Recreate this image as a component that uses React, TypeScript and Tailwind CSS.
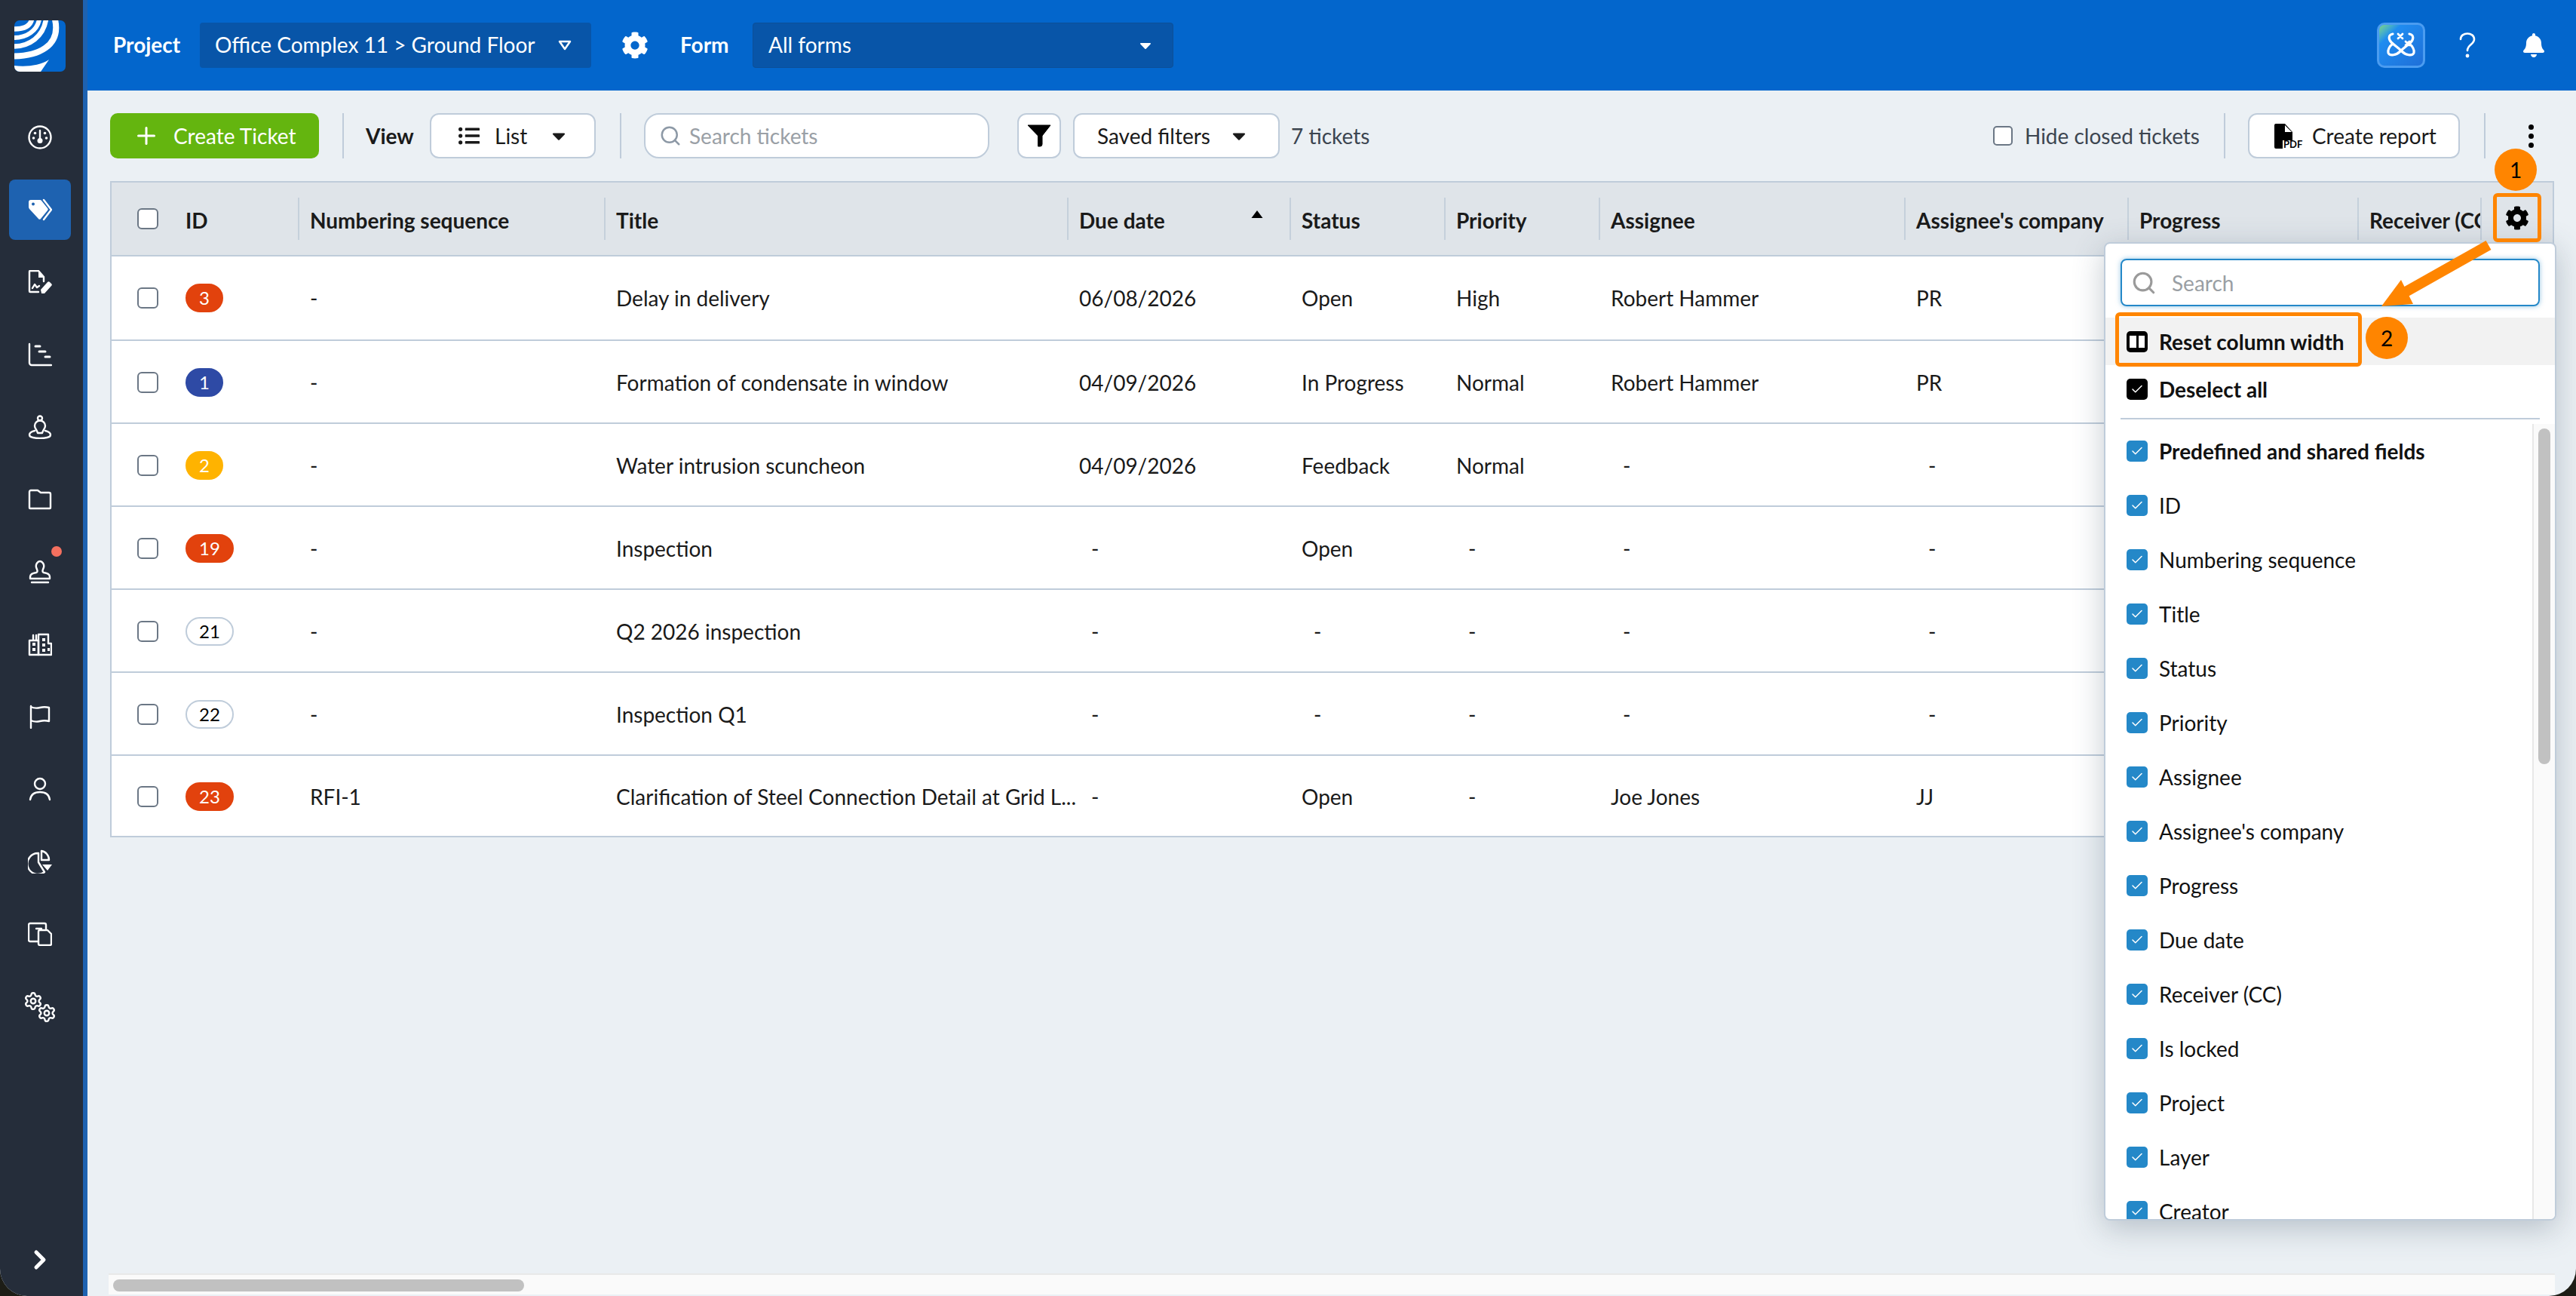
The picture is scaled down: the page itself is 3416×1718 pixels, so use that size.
import { FaBell, FaCaretDown, FaCog, FaListUl } from "react-icons/fa";
import { Check, ChevronRight, Plus, Search, Settings } from "lucide-react";
import type { ReactNode } from "react";

const columnGrid =
  "grid grid-cols-[247px_406px_614px_295px_205px_205px_405px_296px_305px_163px_96px]";

const stroke = {
  fill: "none",
  stroke: "white",
  strokeWidth: 2.4,
  strokeLinecap: "round" as const,
  strokeLinejoin: "round" as const,
};

function Icon({ children }: { children: ReactNode }) {
  return (
    <svg viewBox="0 0 32 32" className="h-8 w-8">
      {children}
    </svg>
  );
}

const navIcons: ReactNode[] = [
  <Icon key="gauge">
    <g {...stroke}>
      <circle cx="16" cy="16" r="14.5" />
      <path d="M16 7v11" />
    </g>
    <circle cx="16" cy="20.500" r="3.5" fill="white" />
    <circle cx="9.500" cy="10.500" r="1.8" fill="white" />
    <circle cx="22.500" cy="10.500" r="1.8" fill="white" />
    <circle cx="7.500" cy="17" r="1.8" fill="white" />
    <circle cx="24.500" cy="17" r="1.8" fill="white" />
  </Icon>,
  <Icon key="tag">
    <path d="M1 6a3 3 0 0 1 3-3h12a3 3 0 0 1 2 1l8 10a2 2 0 0 1 0 3l-9 11a2 2 0 0 1-3 0L2 15a4 4 0 0 1-1-3z" fill="white" />
    <circle cx="7" cy="8.500" r="2" fill="#1e62b0" />
    <path d="M21 3l10 13-10 13" {...stroke} />
  </Icon>,
  <Icon key="sign">
    <g {...stroke}>
      <path d="M21 15V9l-7-8H3a1 1 0 0 0-1 1v26a1 1 0 0 0 1 1h11" />
      <path d="M6 24l3-5 3 4 3-2" />
    </g>
    <path d="M14 1v9h8z" fill="white" />
    <path d="M18 31l-1-5 9-10a2 2 0 0 1 3 0l2 2a2 2 0 0 1 0 3l-9 10z" fill="white" />
  </Icon>,
  <Icon key="gantt">
    <g {...stroke}>
      <path d="M2 2v25a3 3 0 0 0 3 3h26" />
      <path d="M10 5h6M15 12h8M23 19h6" strokeWidth="3" />
    </g>
  </Icon>,
  <Icon key="pin">
    <g {...stroke}>
      <circle cx="16" cy="4.5" r="3" />
      <path d="M13 24c-1-4-4-6-4-9.500a7 7 0 0 1 14 0c0 3.500-3 5.500-4 9.500z" />
      <path d="M9 21c-4 1-7 3-7 5.500 0 3 7 4.500 14 4.500s14-1.500 14-4.500c0-2.500-3-4.500-7-5.500" />
    </g>
  </Icon>,
  <Icon key="folder">
    <path
      {...stroke}
      d="M2 6a2 2 0 0 1 2-2h9l4 3h11a2 2 0 0 1 2 2v18a1 1 0 0 1-1 1H3a1 1 0 0 1-1-1z"
    />
  </Icon>,
  <Icon key="stamp">
    <g {...stroke}>
      <path d="M5 30h22" />
      <path d="M3 23c0-4 3-5 8-6 3-1 1-4 0-7-1-4 2-8 5-8s6 4 5 8c-1 3-3 6 0 7 5 1 8 2 8 6v2H3z" />
    </g>
  </Icon>,
  <Icon key="building">
    <g {...stroke}>
      <path d="M2 30V11h12v19z" />
      <path d="M14 30V3h13v12h4v15z" />
      <path d="M7 4v6M11 4v6" />
    </g>
    <g fill="white">
      <rect x="6" y="14" width="4" height="4" />
      <rect x="6" y="21" width="4" height="4" />
      <rect x="19" y="8" width="4" height="4" />
      <rect x="19" y="15" width="4" height="4" />
      <rect x="19" y="22" width="4" height="4" />
      <rect x="26" y="21" width="3" height="4" />
    </g>
  </Icon>,
  <Icon key="flag">
    <path
      {...stroke}
      d="M4 31V2M4 3c4 2 8 2 12 1s8-1 12 0v18c-4-1-8-1-12 0s-8 1-12-1"
    />
  </Icon>,
  <Icon key="person">
    <g {...stroke}>
      <circle cx="16" cy="9" r="7" />
      <path d="M3 30c1-7 6-10 13-10s12 3 13 10" />
    </g>
  </Icon>,
  <Icon key="pie">
    <g {...stroke}>
      <path d="M14 5a14 14 0 1 0 8 25L14 17z" />
      <path d="M18 2a12 12 0 0 1 10 12H18z" />
    </g>
    <path d="M19 20h13l-6 8z" fill="white" />
  </Icon>,
  <Icon key="copy">
    <g {...stroke}>
      <path d="M13 26H3a2 2 0 0 1-2-2V4a2 2 0 0 1 2-2h19a2 2 0 0 1 2 2v5" />
      <path d="M16 11h10l5 5v13a2 2 0 0 1-2 2H16a2 2 0 0 1-2-2V13a2 2 0 0 1 2-2z" />
      <path d="M11 9h7" />
    </g>
  </Icon>,
  <div key="gears" className="relative h-10 w-10">
    <Settings className="absolute -left-0.5 top-0 h-[26px] w-[26px] text-white" strokeWidth={2.2} />
    <Settings className="absolute -bottom-0.5 -right-0.5 h-[26px] w-[26px] text-white" strokeWidth={2.2} />
  </div>,
];

type Ticket = {
  id: number;
  badge: string;
  seq: string;
  title: string;
  due: string;
  status: string;
  priority: string;
  assignee: string;
  company: string;
};

const red = "border-[#e2420d] bg-[#e2420d] text-white";
const plain = "border-[#bfccda] bg-white text-black";

const tickets: Ticket[] = [
  { id: 3, badge: red, seq: "-", title: "Delay in delivery", due: "06/08/2026", status: "Open", priority: "High", assignee: "Robert Hammer", company: "PR" },
  { id: 1, badge: "border-[#2e4aa5] bg-[#2e4aa5] text-white", seq: "-", title: "Formation of condensate in window", due: "04/09/2026", status: "In Progress", priority: "Normal", assignee: "Robert Hammer", company: "PR" },
  { id: 2, badge: "border-[#ffb300] bg-[#ffb300] text-white", seq: "-", title: "Water intrusion scuncheon", due: "04/09/2026", status: "Feedback", priority: "Normal", assignee: "-", company: "-" },
  { id: 19, badge: red, seq: "-", title: "Inspection", due: "-", status: "Open", priority: "-", assignee: "-", company: "-" },
  { id: 21, badge: plain, seq: "-", title: "Q2 2026 inspection", due: "-", status: "-", priority: "-", assignee: "-", company: "-" },
  { id: 22, badge: plain, seq: "-", title: "Inspection Q1", due: "-", status: "-", priority: "-", assignee: "-", company: "-" },
  { id: 23, badge: red, seq: "RFI-1", title: "Clarification of Steel Connection Detail at Grid L...", due: "-", status: "Open", priority: "-", assignee: "Joe Jones", company: "JJ" },
];

const columnNames = [
  "Predefined and shared fields",
  "ID",
  "Numbering sequence",
  "Title",
  "Status",
  "Priority",
  "Assignee",
  "Assignee's company",
  "Progress",
  "Due date",
  "Receiver (CC)",
  "Is locked",
  "Project",
  "Layer",
  "Creator",
];

function Box() {
  return (
    <span className="block h-7 w-7 shrink-0 rounded-[6px] border-2 border-[#6b7785] bg-white" />
  );
}

function Cell({ value }: { value: string }) {
  return (
    <div className="flex items-center whitespace-nowrap pl-4">
      <span className={value === "-" ? "pl-4" : ""}>{value}</span>
    </div>
  );
}

function HeadCell({ label, children }: { label: string; children?: ReactNode }) {
  return (
    <div className="flex h-full items-center py-[20px]">
      <div className="flex h-full w-full items-center overflow-hidden whitespace-nowrap border-l-2 border-[#c5d0db] pl-[14px] pt-[3px]">
        {label}
        {children}
      </div>
    </div>
  );
}

function Badge({ ticket }: { ticket: Ticket }) {
  return (
    <span
      className={`flex h-[38px] items-center justify-center rounded-full border-2 text-[24px] ${ticket.badge} ${
        ticket.id > 9 ? "w-16" : "w-[50px]"
      }`}
    >
      {ticket.id}
    </span>
  );
}

function Pill({ className, children }: { className: string; children: ReactNode }) {
  return (
    <div
      className={`flex h-[60px] shrink-0 items-center rounded-[12px] border-2 border-[#bfccda] bg-white ${className}`}
    >
      {children}
    </div>
  );
}

function Sep({ className = "" }: { className?: string }) {
  return <span className={`block h-[60px] w-0.5 shrink-0 bg-[#bfccda] ${className}`} />;
}

function Sidebar() {
  return (
    <aside className="flex w-[116px] shrink-0 flex-col border-r-[6px] border-[#1e62b0] bg-[#252d3a] pr-1">
      <div className="flex h-[134px] shrink-0 items-start justify-center pt-[27px]">
        <svg viewBox="0 0 68 68" className="h-[68px] w-[68px]">
          <clipPath id="logo-clip">
            <rect width="68" height="68" rx="7" />
          </clipPath>
          <g clipPath="url(#logo-clip)">
            <rect width="68" height="68" fill="#0366cc" />
            <g fill="none" stroke="white">
              <path d="M0 11.500C12 11.500 21 8 23 -1" strokeWidth="6.500" />
              <path d="M0 23C16 23 30 14 33 -1" strokeWidth="6" />
              <path d="M0 34.500C20 34 38 22 42 -1" strokeWidth="6.500" />
              <path d="M0 47.500C30 47 62 35 54 -1" strokeWidth="8" />
            </g>
            <path d="M0 60C15 62 34 60 46 52L35 68H0z" fill="white" />
          </g>
        </svg>
      </div>
      {navIcons.map((icon, i) => (
        <div key={i} className="flex h-24 shrink-0 items-center justify-center">
          <div
            className={`relative flex h-20 w-[82px] items-center justify-center rounded-[8px] ${
              i === 1 ? "bg-[#1e62b0]" : ""
            }`}
          >
            {icon}
            {i === 6 && (
              <span className="absolute right-[12px] top-[6px] h-3.5 w-3.5 rounded-full bg-[#f4705f]" />
            )}
          </div>
        </div>
      ))}
      <div className="mt-auto flex justify-center pb-[28px]">
        <ChevronRight className="h-10 w-10 text-white" strokeWidth={3} />
      </div>
    </aside>
  );
}

function TopBar() {
  return (
    <header className="flex h-[120px] shrink-0 items-center bg-[#0366cc] pl-[34px] pr-10 text-white">
      <span className="w-[115px] shrink-0 pb-[3px] font-bold">Project</span>
      <div className="flex h-[60px] w-[519px] shrink-0 items-center justify-between rounded-[4px] bg-[#0855a8] pl-5 pr-[26px]">
        <span className="pb-[3px]">Office Complex 11 &gt; Ground Floor</span>
        <svg viewBox="0 0 18 14" className="h-3.5 w-[18px]">
          <path d="M2 2h14L9 12z" fill="none" stroke="white" strokeWidth="2.5" strokeLinejoin="round" />
        </svg>
      </div>
      <FaCog className="ml-10 h-9 w-9 shrink-0" />
      <span className="ml-[42px] w-24 shrink-0 pb-[3px] font-bold">Form</span>
      <div className="flex h-[60px] w-[558px] shrink-0 items-center justify-between rounded-[4px] border border-[#0c4f98] bg-[#0855a8] pl-5 pr-6">
        <span className="pb-[3px]">All forms</span>
        <FaCaretDown className="h-6 w-6" />
      </div>
      <div className="ml-auto flex h-[60px] w-16 shrink-0 items-center justify-center rounded-[10px] border-[3px] border-[#4b9cf0] bg-gradient-to-br from-[#7ed47f] via-[#1f8cf0] via-[25%] to-[#1f6fd8]">
        <svg viewBox="0 0 40 40" className="h-10 w-10">
          <g fill="none" stroke="white" strokeWidth="3.200" strokeLinecap="round">
            <path d="M9 5C3 6 3 12 7 16c4 4 9 7 14 12 5 5 14 7 16 2 1-4-2-9-6-12" />
            <path d="M31 5c6 1 6 7 2 11-4 4-9 7-14 12-5 5-14 7-16 2-1-4 2-9 6-12" />
            <path d="M16 5l6 6M22 5l-6 6M26 15l5 5M31 15l-5 5" strokeWidth="2.800" />
          </g>
        </svg>
      </div>
      <svg viewBox="0 0 24 36" className="ml-11 h-9 w-6 shrink-0">
        <path
          d="M3 10c0-10 18-10 18 0 0 7-9 7-9 15"
          fill="none"
          stroke="white"
          strokeWidth="2.6"
          strokeLinecap="round"
        />
        <circle cx="12" cy="32" r="2.400" fill="white" />
      </svg>
      <FaBell className="ml-[60px] h-8 w-8 shrink-0" />
    </header>
  );
}

function Toolbar() {
  return (
    <div className="flex items-center pl-[30px] pt-[30px] text-[#1a1a1a]">
      <div className="flex h-[60px] w-[277px] shrink-0 items-center gap-[18px] rounded-[10px] bg-[#64b50f] pl-[30px] text-white">
        <Plus className="h-9 w-9" strokeWidth={2} />
        <span>Create Ticket</span>
      </div>
      <Sep className="ml-[31px]" />
      <span className="ml-[29px] w-[85px] shrink-0 font-bold">View</span>
      <Pill className="w-[220px] pl-[34px]">
        <FaListUl className="h-7 w-8" />
        <span className="ml-[18px]">List</span>
        <FaCaretDown className="ml-7 h-7 w-7" />
      </Pill>
      <Sep className="ml-8" />
      <Pill className="ml-[30px] w-[458px] rounded-[20px] pl-[18px] text-[#9aa0a6]">
        <Search className="h-[30px] w-[30px] text-[#8d99a6]" strokeWidth={2} />
        <span className="ml-2.5">Search tickets</span>
      </Pill>
      <Pill className="ml-[37px] w-[58px] justify-center">
        <svg viewBox="0 0 32 30" className="h-[30px] w-8">
          <path d="M1 1h30L20 15v11q0 3-2.500 3h-3V15z" fill="black" stroke="black" strokeLinejoin="round" />
        </svg>
      </Pill>
      <Pill className="ml-4 w-[274px] pl-[30px]">
        <span>Saved filters</span>
        <FaCaretDown className="ml-6 h-7 w-7" />
      </Pill>
      <span className="ml-[15px] whitespace-nowrap text-[#3c4550]">7 tickets</span>
      <span className="ml-auto block h-[26px] w-[26px] shrink-0 rounded-[5px] border-2 border-[#6b7785] bg-white" />
      <span className="ml-[16px] whitespace-nowrap text-[#3c4550]">Hide closed tickets</span>
      <Sep className="ml-8" />
      <Pill className="ml-[30px] w-[281px] pl-[33px]">
        <div className="relative h-[33px] w-[33px] shrink-0">
          <svg viewBox="0 0 24 33" className="h-[33px] w-6">
            <path d="M2 0h12l10 11v11H11v11H2a2 2 0 0 1-2-2V2a2 2 0 0 1 2-2z" fill="black" />
            <path d="M14 2v9h9z" fill="white" />
          </svg>
          <span className="absolute -bottom-px left-3 text-[13px] font-bold leading-none text-black">
            PDF
          </span>
        </div>
        <span className="ml-[17px] whitespace-nowrap">Create report</span>
      </Pill>
      <Sep className="ml-8" />
      <div className="ml-[57px] mr-[56px] flex flex-col gap-[5px]">
        <span className="block h-[7px] w-[7px] rounded-full bg-black" />
        <span className="block h-[7px] w-[7px] rounded-full bg-black" />
        <span className="block h-[7px] w-[7px] rounded-full bg-black" />
      </div>
    </div>
  );
}

function rowClass(i: number) {
  if (i === 0) return "h-[112px] border-b-2 border-[#bfccda]";
  if (i === tickets.length - 1) return "h-[106px] pt-0.5";
  return "h-[110px] border-b-2 border-[#bfccda] pt-px";
}

function TicketTable() {
  return (
    <div className="ml-[30px] mt-[30px] w-[3241px] border-2 border-[#bfccda] bg-white text-[#1a1a1a]">
      <div className={`${columnGrid} h-[98px] border-b-2 border-[#bfccda] bg-[#dfe4e9] font-bold`}>
        <div className="flex items-center gap-[36px] pl-[34px]">
          <Box />
          <span className="pt-[3px]">ID</span>
        </div>
        <HeadCell label="Numbering sequence" />
        <HeadCell label="Title" />
        <HeadCell label="Due date">
          <svg viewBox="0 0 20 12" className="mb-4 ml-[112px] h-2.5 w-5">
            <path d="M10 0l9 12H1z" fill="black" />
          </svg>
        </HeadCell>
        <HeadCell label="Status" />
        <HeadCell label="Priority" />
        <HeadCell label="Assignee" />
        <HeadCell label="Assignee's company" />
        <HeadCell label="Progress" />
        <HeadCell label="Receiver (CC)" />
        <HeadCell label="" />
      </div>
      {tickets.map((t, i) => (
        <div key={t.id} className={`${columnGrid} ${rowClass(i)}`}>
          <div className="flex items-center gap-[36px] pl-[34px]">
            <Box />
            <Badge ticket={t} />
          </div>
          <div className="flex items-center pl-4">{t.seq}</div>
          <div className="flex items-center whitespace-nowrap pl-4">{t.title}</div>
          <Cell value={t.due} />
          <Cell value={t.status} />
          <Cell value={t.priority} />
          <Cell value={t.assignee} />
          <Cell value={t.company} />
        </div>
      ))}
    </div>
  );
}

function ColumnMenu() {
  return (
    <div className="absolute left-[2790px] top-[321px] flex h-[1297px] w-[600px] flex-col overflow-hidden rounded-[8px] border-2 border-[#bfccda] bg-white text-[#111] shadow-[0_10px_40px_rgba(60,80,100,0.3)]">
      <div className="mx-5 mt-5 flex h-[63px] shrink-0 items-center rounded-[8px] border-2 border-[#2488c8] pl-3 shadow-[0_0_6px_rgba(36,136,200,0.5)]">
        <Search className="h-[34px] w-[34px] text-[#9a9a9a]" strokeWidth={2.2} />
        <span className="ml-5 text-[#9a9fa4]">Search</span>
      </div>
      <div className="mt-[15px] flex h-[63px] shrink-0 items-center bg-[#f2f2f2] pl-[28px] font-bold">
        <span className="flex h-7 w-7 items-center justify-center gap-[3px] rounded-[5px] bg-black px-[4px] py-[6px]">
          <span className="block h-full flex-1 bg-white" />
          <span className="block h-full flex-1 bg-white" />
        </span>
        <span className="ml-[15px]">Reset column width</span>
      </div>
      <div className="flex h-[63px] shrink-0 items-center pl-[28px] font-bold">
        <span className="flex h-7 w-7 items-center justify-center rounded-[5px] bg-black">
          <Check className="h-[18px] w-[18px] text-white" strokeWidth={2} />
        </span>
        <span className="ml-[15px]">Deselect all</span>
      </div>
      <div className="mx-5 mt-[7px] h-0.5 shrink-0 bg-[#bfccda]" />
      <div className="flex min-h-0 flex-1 pt-1.5">
        <div className="min-w-0 flex-1 overflow-hidden">
          {columnNames.map((name, i) => (
            <div key={name} className={`flex h-[72px] items-center pl-7 ${i === 0 ? "font-bold" : ""}`}>
              <span className="flex h-7 w-7 shrink-0 items-center justify-center rounded-[5px] bg-[#2488c8]">
                <Check className="h-[18px] w-[18px] text-white" strokeWidth={2} />
              </span>
              <span className="ml-[15px]">{name}</span>
            </div>
          ))}
        </div>
        <div className="w-[30px] shrink-0 border-l-2 border-[#e8e8e8] bg-[#fafafa] pl-[6px] pt-1.5">
          <div className="h-[445px] w-4 rounded-full bg-[#c1c1c1]" />
        </div>
      </div>
    </div>
  );
}

function Annotations() {
  return (
    <>
      <div className="absolute left-[3306px] top-[256px] flex h-[65px] w-16 items-center justify-center rounded-[6px] border-[5px] border-[#ff8500]">
        <FaCog className="h-8 w-8 text-black" />
      </div>
      <span className="absolute left-[3308px] top-[197px] flex h-14 w-14 items-center justify-center rounded-full bg-[#ff8500] text-black">
        1
      </span>
      <div className="absolute left-[2805px] top-[414px] h-[72px] w-[327px] rounded-[6px] border-[5px] border-[#ff8500]" />
      <span className="absolute left-[3137px] top-[420px] flex h-14 w-14 items-center justify-center rounded-full bg-[#ff8500] text-black">
        2
      </span>
      <svg viewBox="0 0 170 100" className="absolute left-[3150px] top-[318px] h-[100px] w-[170px]">
        <path d="M150 7L40 69" stroke="#ff8500" strokeWidth="14" fill="none" />
        <path d="M8 88L34 53L50 85z" fill="#ff8500" />
      </svg>
    </>
  );
}

export default function App() {
  return (
    <div className="h-screen w-full overflow-hidden bg-[#1d1d16] font-['Lato',sans-serif] text-[28px]">
      <div className="relative flex h-full overflow-hidden rounded-b-[36px] bg-[#ebf0f4]">
        <Sidebar />
        <main className="flex min-w-0 flex-1 flex-col">
          <TopBar />
          <Toolbar />
          <TicketTable />
          <div className="mb-0.5 ml-7 mt-auto h-7 w-[3244px] shrink-0 border-t-2 border-[#e8e8e8] bg-[#fafafa] px-[6px] pt-1.5">
            <div className="h-4 w-[545px] rounded-full bg-[#c1c1c1]" />
          </div>
        </main>
        <ColumnMenu />
        <Annotations />
      </div>
    </div>
  );
}
